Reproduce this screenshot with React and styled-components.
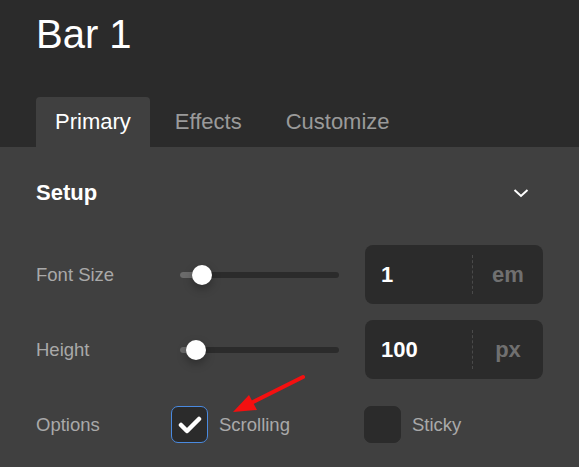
import React from 'react';
import styled, { createGlobalStyle } from 'styled-components';

const GlobalStyle = createGlobalStyle`
    body {
        margin: 0;
        background: #404040;
        font-family: "Liberation Sans", Arial, sans-serif;
    }
`;

const Page = styled.div`
    position: relative;
    width: 579px;
    height: 467px;
    overflow: hidden;
    background: #404040;
`;

const Header = styled.div`
    background: #2b2b2b;
    padding: 11px 36px 0;
`;

const Title = styled.h1`
    margin: 0;
    font-size: 40px;
    line-height: 46px;
    font-weight: normal;
    color: #fff;
`;

const Tabs = styled.div`
    display: flex;
    gap: 6px;
    margin-top: 40px;
`;

const Tab = styled.div`
    height: 50px;
    padding: 0 19px;
    display: flex;
    align-items: center;
    font-size: 22px;
    border-radius: 4px 4px 0 0;
    color: ${p => (p.$active ? '#fff' : '#9a9a9a')};
    background: ${p => (p.$active ? '#404040' : 'transparent')};
`;

const Body = styled.div`
    padding: 16px 36px 0;
`;

const SectionHeader = styled.div`
    height: 60px;
    margin-bottom: 22px;
    padding-right: 14px;
    display: flex;
    align-items: center;
    justify-content: space-between;
`;

const SectionTitle = styled.h2`
    margin: 0;
    font-size: 22px;
    font-weight: bold;
    color: #fff;
`;

const Grid = styled.div`
    display: grid;
    grid-template-columns: 136px 193px 178px;
    grid-auto-rows: 59px;
    row-gap: 16px;
    align-items: center;
`;

const Label = styled.div`
    font-size: 18.5px;
    color: #a9a9a9;
`;

const SliderWrap = styled.div`
    padding: 0 26px 0 8px;
`;

const Track = styled.div`
    position: relative;
    height: 6px;
    border-radius: 3px;
    background: #2b2b2b;
`;

const Fill = styled.div`
    height: 100%;
    border-radius: 3px 0 0 3px;
    background: #6b6b6b;
`;

const Thumb = styled.div`
    position: absolute;
    top: 50%;
    width: 20px;
    height: 20px;
    margin: -10px 0 0 -10px;
    border-radius: 50%;
    background: #fff;
    box-shadow: 0 4px 10px rgba(0, 0, 0, 0.3);
`;

const InputBox = styled.div`
    height: 59px;
    display: flex;
    align-items: center;
    background: #2b2b2b;
    border-radius: 8px;
`;

const Value = styled.div`
    flex: 1;
    padding-left: 16px;
    font-size: 22px;
    font-weight: bold;
    color: #fff;
`;

const Unit = styled.div`
    width: 70px;
    height: 39px;
    display: flex;
    align-items: center;
    justify-content: center;
    border-left: 1px dashed #4a4a4a;
    font-size: 22px;
    font-weight: bold;
    color: #707070;
`;

const Option = styled.label`
    display: flex;
    align-items: center;
    gap: 11px;
    margin-left: -1px;
    font-size: 18.5px;
    color: #a9a9a9;
`;

const Box = styled.span`
    width: 37px;
    height: 37px;
    box-sizing: border-box;
    display: flex;
    align-items: center;
    justify-content: center;
    border-radius: 7px;
    background: #2b2b2b;
    border: 1px solid ${p => (p.$checked ? '#4a8ae0' : '#2b2b2b')};
`;

const Arrow = styled.svg`
    position: absolute;
    left: 0;
    top: 0;
    pointer-events: none;
`;

function Slider({ pos }) {
    return (
        <SliderWrap>
            <Track>
                <Fill style={{ width: `${pos}px` }} />
                <Thumb style={{ left: `${pos}px` }} />
            </Track>
        </SliderWrap>
    );
}

function NumberField({ value, unit }) {
    return (
        <InputBox>
            <Value>{value}</Value>
            <Unit>{unit}</Unit>
        </InputBox>
    );
}

function Checkbox({ checked, label }) {
    return (
        <Option>
            <Box $checked={checked}>
                {checked && (
                    <svg width="24" height="18" viewBox="0 0 24 18">
                        <path d="M3 9 L9 15 L21 3" fill="none" stroke="#fff" strokeWidth="4.5" strokeLinecap="round" strokeLinejoin="round" />
                    </svg>
                )}
            </Box>
            {label}
        </Option>
    );
}

function App() {
    return (
        <Page>
            <GlobalStyle />
            <Header>
                <Title>Bar 1</Title>
                <Tabs>
                    <Tab $active>Primary</Tab>
                    <Tab>Effects</Tab>
                    <Tab>Customize</Tab>
                </Tabs>
            </Header>
            <Body>
                <SectionHeader>
                    <SectionTitle>Setup</SectionTitle>
                    <svg width="16" height="10" viewBox="0 0 16 10">
                        <path d="M1.5 2 L8 8 L14.5 2" fill="none" stroke="#fff" strokeWidth="2" />
                    </svg>
                </SectionHeader>
                <Grid>
                    <Label>Font Size</Label>
                    <Slider pos={22} />
                    <NumberField value="1" unit="em" />

                    <Label>Height</Label>
                    <Slider pos={16} />
                    <NumberField value="100" unit="px" />

                    <Label>Options</Label>
                    <Checkbox checked label="Scrolling" />
                    <Checkbox label="Sticky" />
                </Grid>
            </Body>
            <Arrow width="579" height="467" viewBox="0 0 579 467">
                <line x1="303" y1="377" x2="252" y2="402.5" stroke="#f41010" strokeWidth="4" strokeLinecap="round" />
                <polygon points="233,412 249,395 257,410" fill="#f41010" />
            </Arrow>
        </Page>
    );
}

export default App;
